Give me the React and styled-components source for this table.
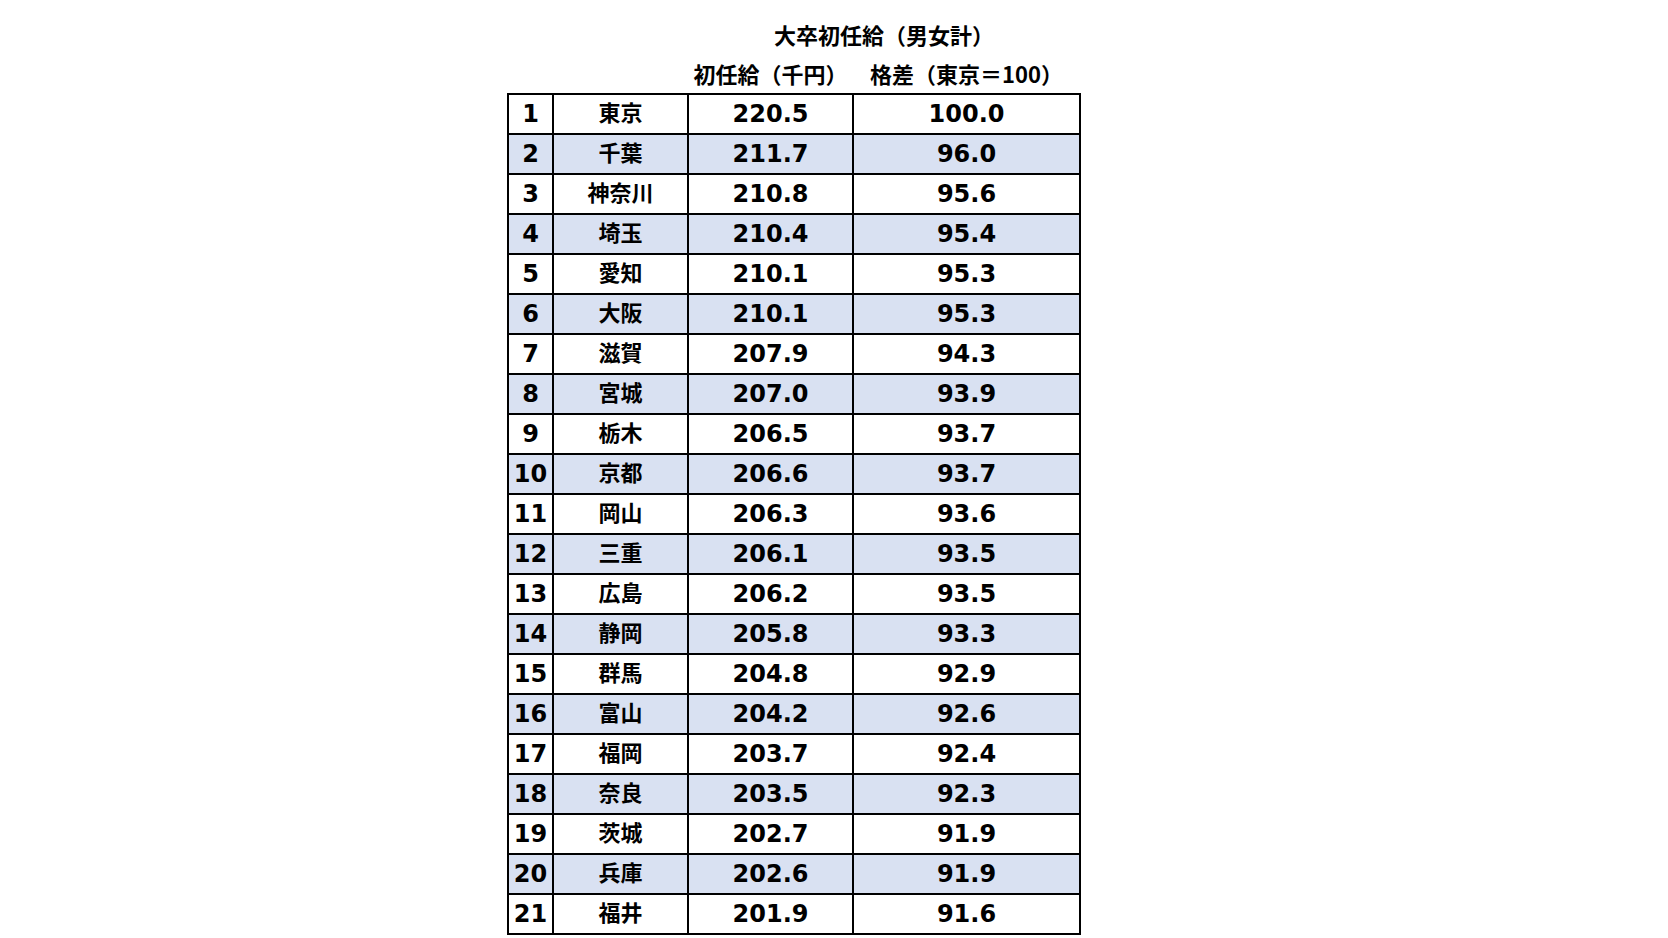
import React from "react";
import styled, { createGlobalStyle } from "styled-components";

const GlobalStyle = createGlobalStyle`
  html, body {
    margin: 0;
    padding: 0;
    background: #ffffff;
  }
  body {
    font-family: "DejaVu Sans", "Noto Sans CJK JP", sans-serif;
    color: #000;
  }
`;

// page wrapper, the table sits left of centre
const Page = styled.div`
  padding: 12px 0 0 507px;
  width: 1668px;
  height: 938px;
  box-sizing: border-box;
  overflow: hidden;
`;

const Table = styled.table`
  border-collapse: collapse;
  table-layout: fixed;
  width: 572px;
`;

const HeadCell = styled.th`
  font-family: "Noto Sans CJK JP", sans-serif;
  font-weight: 700;
  font-size: 22px;
  line-height: 22px;
  text-align: center;
  white-space: nowrap;
  padding: 0;
  height: ${({ $h }) => $h}px;
  vertical-align: ${({ $align }) => $align || "middle"};
  padding-bottom: ${({ $pb }) => $pb || 0}px;
  box-sizing: border-box;
`;

const Row = styled.tr`
  height: 40px;
  background: ${({ $shade }) => ($shade ? "#d9e1f2" : "#ffffff")};
`;

const Cell = styled.td`
  border: 2px solid #000;
  padding: 0 0 ${({ $jp }) => ($jp ? "6px" : "0")};
  text-align: center;
  vertical-align: middle;
  font-weight: 700;
  font-size: ${({ $jp }) => ($jp ? "22px" : "24px")};
  font-family: ${({ $jp }) =>
    $jp ? '"Noto Sans CJK JP", sans-serif' : '"DejaVu Sans", "Noto Sans CJK JP", sans-serif'};
  line-height: 1;
  white-space: nowrap;
`;

const rows = [
  ["東京", "220.5", "100.0"],
  ["千葉", "211.7", "96.0"],
  ["神奈川", "210.8", "95.6"],
  ["埼玉", "210.4", "95.4"],
  ["愛知", "210.1", "95.3"],
  ["大阪", "210.1", "95.3"],
  ["滋賀", "207.9", "94.3"],
  ["宮城", "207.0", "93.9"],
  ["栃木", "206.5", "93.7"],
  ["京都", "206.6", "93.7"],
  ["岡山", "206.3", "93.6"],
  ["三重", "206.1", "93.5"],
  ["広島", "206.2", "93.5"],
  ["静岡", "205.8", "93.3"],
  ["群馬", "204.8", "92.9"],
  ["富山", "204.2", "92.6"],
  ["福岡", "203.7", "92.4"],
  ["奈良", "203.5", "92.3"],
  ["茨城", "202.7", "91.9"],
  ["兵庫", "202.6", "91.9"],
  ["福井", "201.9", "91.6"],
];

const App = () => (
  <>
    <GlobalStyle />
    <Page>
      <Table>
        <colgroup>
          <col style={{ width: 45 }} />
          <col style={{ width: 135 }} />
          <col style={{ width: 165 }} />
          <col style={{ width: 227 }} />
        </colgroup>
        <thead>
          <tr>
            <HeadCell $h={44} />
            <HeadCell $h={44} />
            <HeadCell $h={44} colSpan={2}>
              大卒初任給（男女計）
            </HeadCell>
          </tr>
          <tr>
            <HeadCell $h={38} />
            <HeadCell $h={38} />
            <HeadCell $h={38} $align="bottom" $pb={9}>
              初任給（千円）
            </HeadCell>
            <HeadCell $h={38} $align="bottom" $pb={9}>
              格差（東京＝100）
            </HeadCell>
          </tr>
        </thead>
        <tbody>
          {rows.map(([pref, pay, gap], i) => (
            <Row key={pref} $shade={i % 2 === 1}>
              <Cell>{i + 1}</Cell>
              <Cell $jp>{pref}</Cell>
              <Cell>{pay}</Cell>
              <Cell>{gap}</Cell>
            </Row>
          ))}
        </tbody>
      </Table>
    </Page>
  </>
);

export default App;
